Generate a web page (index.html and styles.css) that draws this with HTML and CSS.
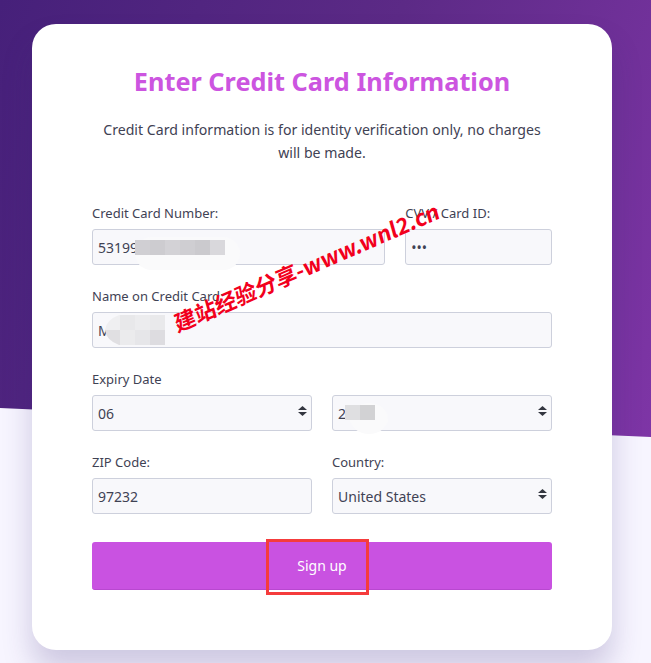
FILE: index.html
```html
<!DOCTYPE html>
<html lang="en">
<head>
<meta charset="utf-8">
<title>Enter Credit Card Information</title>
<link rel="stylesheet" href="styles.css">
</head>
<body>
<div class="backdrop"></div>
<main class="card">
  <h1 class="title">Enter Credit Card Information</h1>
  <p class="intro">Credit Card information is for identity verification only, no charges will be made.</p>
  <form class="form">
    <div class="row row-wide">
      <div class="field">
        <label class="label">Credit Card Number:</label>
        <div class="control">
          <input class="input" type="text" value="53199">
          <span class="smudge smudge-card"></span>
          <svg class="mosaic mosaic-card" width="90" height="15" viewBox="0 0 90 15"><rect width="15" height="15" fill="#d0cfd3"/><rect x="15" width="15" height="15" fill="#cdccd0"/><rect x="30" width="15" height="15" fill="#d3d2d6"/><rect x="45" width="15" height="15" fill="#cfced2"/><rect x="60" width="15" height="15" fill="#cbcace"/><rect x="75" width="15" height="15" fill="#d9d8dc"/></svg>
        </div>
      </div>
      <div class="field">
        <label class="label">CVV / Card ID:</label>
        <div class="control"><input class="input" type="text" value="•••"></div>
      </div>
    </div>
    <div class="row row-single">
      <div class="field">
        <label class="label">Name on Credit Card:</label>
        <div class="control">
          <input class="input" type="text" value="M">
          <svg class="mosaic mosaic-name" width="60" height="30" viewBox="0 0 60 30"><path d="M14 0H15V15H0Q1 5 14 0Z" fill="#efeff1"/><path d="M0 15H15V30H14Q1 25 0 15Z" fill="#e0dfe2"/><rect x="15" width="15" height="15" fill="#e8e8ea"/><rect x="30" width="15" height="15" fill="#ececee"/><rect x="45" width="15" height="15" fill="#e9e9eb"/><rect x="15" y="15" width="15" height="15" fill="#ebebed"/><rect x="30" y="15" width="15" height="15" fill="#e6e6e9"/><rect x="45" y="15" width="15" height="15" fill="#dddce0"/></svg>
        </div>
      </div>
    </div>
    <div class="row row-even">
      <div class="field">
        <label class="label">Expiry Date</label>
        <div class="control">
          <select class="input select"><option>06</option></select>
          <svg class="updown" width="9" height="10" viewBox="0 0 9 10"><path d="M4.5 0 9 4H0ZM0 6H9L4.5 10Z"/></svg>
        </div>
      </div>
      <div class="field">
        <label class="label label-blank">&nbsp;</label>
        <div class="control">
          <select class="input select"><option>2</option></select>
          <svg class="updown" width="9" height="10" viewBox="0 0 9 10"><path d="M4.5 0 9 4H0ZM0 6H9L4.5 10Z"/></svg>
          <span class="smudge smudge-year"></span>
          <svg class="mosaic mosaic-year" width="30" height="15" viewBox="0 0 30 15"><rect width="15" height="15" fill="#dfdfe1"/><rect x="15" width="15" height="15" fill="#d2d2d4"/></svg>
        </div>
      </div>
    </div>
    <div class="row row-even">
      <div class="field">
        <label class="label">ZIP Code:</label>
        <div class="control"><input class="input" type="text" value="97232"></div>
      </div>
      <div class="field">
        <label class="label">Country:</label>
        <div class="control">
          <select class="input select"><option>United States</option></select>
          <svg class="updown" width="9" height="10" viewBox="0 0 9 10"><path d="M4.5 0 9 4H0ZM0 6H9L4.5 10Z"/></svg>
        </div>
      </div>
    </div>
    <div class="submit-wrap">
      <button class="submit" type="button">Sign up</button>
      <span class="highlight"></span>
    </div>
  </form>
</main>
<div class="watermark">建站经验分享-www.wnl2.cn</div>
</body>
</html>
```
FILE: styles.css
```css
* { box-sizing: border-box; }
html, body { margin: 0; height: 663px; overflow: hidden; }
body {
  position: relative;
  background: #f7f5ff;
  font-family: "Noto Sans", "Open Sans", sans-serif;
  color: #3f4254;
  padding: 24px 39px 0 32px;
}
.backdrop {
  position: absolute;
  left: 0; top: 0;
  width: 651px; height: 437px;
  background: linear-gradient(110deg, #46207a 0%, #5c2a86 50%, #7e35a6 100%);
  clip-path: polygon(0 0, 100% 0, 100% 100%, 0 408px);
}
.card {
  position: relative;
  width: 580px;
  height: 626px;
  background: #fff;
  border-radius: 24px;
  box-shadow: 0 20px 30px rgba(60, 40, 120, .22);
  padding: 39px 60px 0;
}
.title {
  margin: 0;
  text-align: center;
  color: #cc55e0;
  font-size: 25.3px;
  line-height: 36px;
  font-weight: 700;
}
.intro {
  margin: 19px 0 0;
  padding: 0 8px;
  text-align: center;
  font-size: 14.13px;
  line-height: 23px;
}
.form { margin-top: 39px; display: flex; flex-direction: column; gap: 21px; }
.row { display: grid; column-gap: 20px; }
.row-wide { grid-template-columns: 2fr 1fr; }
.row-single { grid-template-columns: 1fr; }
.row-even { grid-template-columns: 1fr 1fr; }
.label {
  display: block;
  font-size: 13px;
  line-height: 20px;
  margin-bottom: 6px;
}
.control { position: relative; height: 36px; }
.input {
  display: block;
  width: 100%;
  height: 36px;
  padding: 0 5px;
  background: #f8f8fb;
  border: 1px solid #cdd0dc;
  border-radius: 3px;
  font: 14px "Noto Sans", "Open Sans", sans-serif;
  color: #3f4254;
  outline: none;
}
.select { appearance: none; -webkit-appearance: none; }
.updown {
  position: absolute;
  right: 5px;
  top: 11px;
  fill: #33363f;
  pointer-events: none;
}
.mosaic { position: absolute; display: block; pointer-events: none; }
.mosaic-card { left: 43px; top: 11px; }
.mosaic-name { left: 13px; top: 3px; }
.mosaic-year { left: 13px; top: 10px; }
.smudge {
  position: absolute;
  background: #fafafb;
  pointer-events: none;
  border-radius: 50%;
}
.smudge-card { left: 43px; top: 8px; width: 105px; height: 33px; border-radius: 20px; }
.smudge-year { left: 18px; top: 8px; width: 38px; height: 31px; }
.submit-wrap { position: relative; margin-top: 7px; }
.submit {
  display: block;
  width: 100%;
  height: 48px;
  background: #c952e1;
  border: 0;
  border-bottom: 1px solid #b848d0;
  border-radius: 3px;
  color: #fff;
  font: 14px "Noto Sans", "Open Sans", sans-serif;
}
.highlight {
  position: absolute;
  left: 174px;
  top: -3px;
  width: 103px;
  height: 56px;
  border: 3px solid #f53c3c;
  pointer-events: none;
}
.watermark {
  position: absolute;
  left: 163px;
  top: 252px;
  width: 280px;
  transform: rotate(-23.5deg) skewX(-8deg);
  white-space: nowrap;
  text-align: center;
  font-family: "Noto Sans CJK SC", "Noto Sans", sans-serif;
  font-size: 22px;
  line-height: 30px;
  font-weight: 700;
  color: #f2001c;
  pointer-events: none;
}
```
